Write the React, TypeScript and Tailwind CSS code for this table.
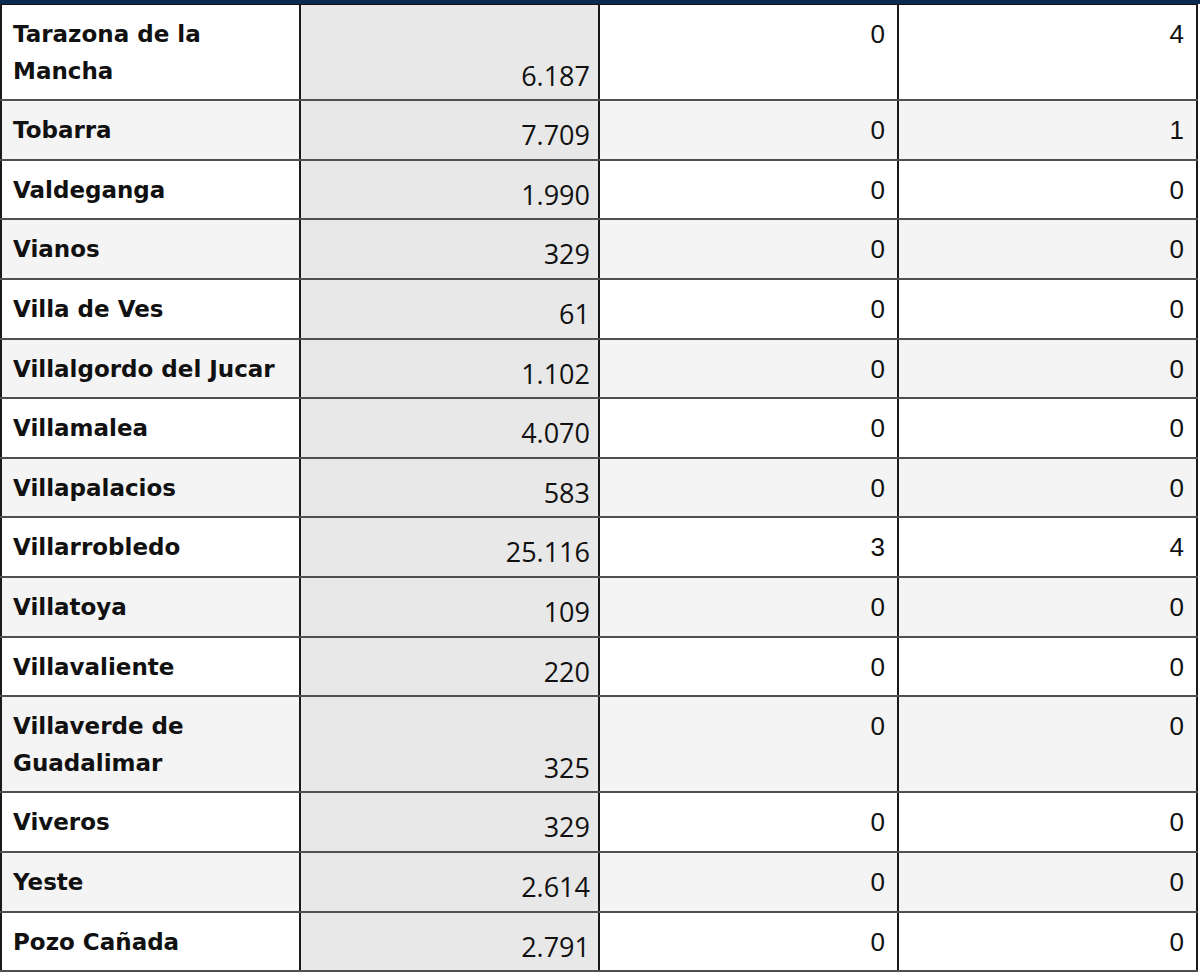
import React from "react"

type Row = {
  name: string
  pop: string
  a: string
  b: string
}

const rows: Row[] = [
  { name: "Tarazona de la Mancha", pop: "6.187", a: "0", b: "4" },
  { name: "Tobarra", pop: "7.709", a: "0", b: "1" },
  { name: "Valdeganga", pop: "1.990", a: "0", b: "0" },
  { name: "Vianos", pop: "329", a: "0", b: "0" },
  { name: "Villa de Ves", pop: "61", a: "0", b: "0" },
  { name: "Villalgordo del Jucar", pop: "1.102", a: "0", b: "0" },
  { name: "Villamalea", pop: "4.070", a: "0", b: "0" },
  { name: "Villapalacios", pop: "583", a: "0", b: "0" },
  { name: "Villarrobledo", pop: "25.116", a: "3", b: "4" },
  { name: "Villatoya", pop: "109", a: "0", b: "0" },
  { name: "Villavaliente", pop: "220", a: "0", b: "0" },
  { name: "Villaverde de Guadalimar", pop: "325", a: "0", b: "0" },
  { name: "Viveros", pop: "329", a: "0", b: "0" },
  { name: "Yeste", pop: "2.614", a: "0", b: "0" },
  { name: "Pozo Cañada", pop: "2.791", a: "0", b: "0" },
]

const cell =
  "border-y-2 border-y-[#4f4f4f] border-x-2 border-x-[#1a1a1a] align-top pt-[11px] pb-[10px] leading-[36.6px]"

export default function App() {
  return (
    <div className="w-[1200px] bg-white">
      <div className="h-[4px] bg-[#0b2a52]" />
      <table className="w-[1198px] table-fixed border-collapse text-[#111]">
        <tbody>
          {rows.map((r, i) => {
            const stripe = i % 2 === 1 ? "bg-[#f4f4f4]" : "bg-white"
            const top = i === 0 ? "border-t-[1px] border-t-[#111]" : ""
            return (
              <tr key={r.name}>
                <td
                  className={`${cell} ${stripe} ${top} px-[11px] text-[23px] font-bold font-['DejaVu_Sans',sans-serif]`}
                >
                  {r.name}
                </td>
                <td
                  className={`${cell} ${top} !align-bottom !pb-[5px] bg-[#e8e8e8] pr-[8px] text-right text-[27px] font-['Open_Sans',sans-serif]`}
                >
                  {r.pop}
                </td>
                <td
                  className={`${cell} ${stripe} ${top} pr-[12px] text-right text-[26px] font-['Liberation_Sans',Arial,sans-serif]`}
                >
                  {r.a}
                </td>
                <td
                  className={`${cell} ${stripe} ${top} pr-[12px] text-right text-[26px] font-['Liberation_Sans',Arial,sans-serif]`}
                >
                  {r.b}
                </td>
              </tr>
            )
          })}
        </tbody>
      </table>
    </div>
  )
}
